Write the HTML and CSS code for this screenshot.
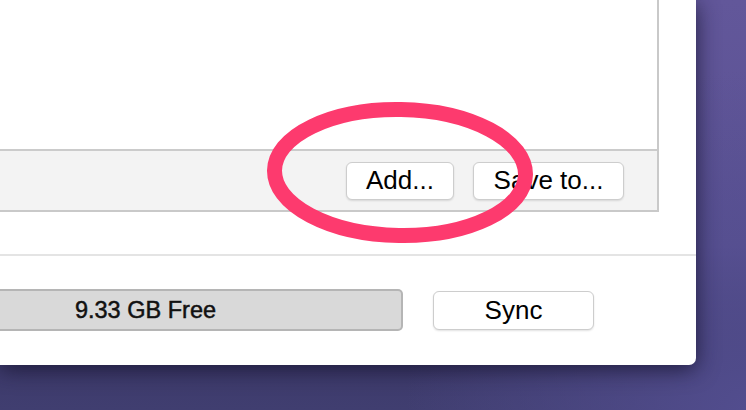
FILE: index.html
```html
<!DOCTYPE html>
<html lang="en">
<head>
    <meta charset="UTF-8">
    <title>Sync</title>
    <link rel="stylesheet" href="styles.css">
</head>
<body>
    <div class="window">
        <div class="list">
            <div class="list-body"></div>
            <div class="list-footer">
                <button class="btn btn-add">Add...</button>
                <button class="btn btn-save">Save to...</button>
            </div>
        </div>

        <div class="separator"></div>

        <div class="status-row">
            <div class="capacity">9.33 GB Free</div>
            <button class="btn btn-sync">Sync</button>
        </div>
    </div>

    <!-- annotation drawn over the screenshot -->
    <svg class="markup" width="746" height="410" viewBox="0 0 746 410">
        <ellipse cx="400" cy="172.5" rx="125.5" ry="63" transform="rotate(1 400 172.5)"
                 fill="none" stroke="#fd3a6e" stroke-width="15"/>
    </svg>
</body>
</html>
```

FILE: styles.css
```css
html, body {
    margin: 0;
    height: 100%;
}
body {
    position: relative;
    overflow: hidden;
    font-family: "Liberation Sans", Arial, sans-serif;
    color: #111;
    background:
        radial-gradient(circle at 100% 100%, #524d8e 0, rgba(82, 77, 142, 0) 40%),
        linear-gradient(180deg, #62579a 0%, #5a5193 60%, #3e3b6c 90%, #403e70 100%);
}
.window {
    width: 696px;
    height: 365px;
    background: #fff;
    border-bottom-right-radius: 7px;
    box-shadow: 0 4px 22px rgba(20, 18, 44, 0.8);
    display: flex;
    flex-direction: column;
}
.list {
    width: 657px;
    height: 210px;
    display: flex;
    flex-direction: column;
    border-right: 2px solid #c9c9c9;
    border-bottom: 2px solid #c9c9c9;
}
.list-body {
    flex: 1;
    background: #fff;
}
.list-footer {
    height: 59px;
    background: #f3f3f3;
    border-top: 2px solid #cbcbcb;
    display: flex;
    align-items: center;
    justify-content: flex-end;
    gap: 19px;
    padding-right: 33px;
}
.btn {
    font-family: inherit;
    font-size: 26px;
    color: #000;
    background: #fff;
    border: 1px solid #cdcdcd;
    border-radius: 6px;
    box-shadow: 0 1px 2px rgba(0, 0, 0, 0.12);
    padding: 0;
    height: 38px;
    cursor: pointer;
}
.btn-add {
    width: 108px;
}
.btn-save {
    width: 151px;
}
.separator {
    height: 2px;
    margin-top: 42px;
    background: #e4e4e4;
}
.status-row {
    display: flex;
    align-items: center;
    gap: 30px;
    margin-top: 33px;
}
.capacity {
    box-sizing: border-box;
    width: 403px;
    height: 42px;
    background: #d9d9d9;
    border: 2px solid #b5b5b5;
    border-left: none;
    border-radius: 0 5px 5px 0;
    display: flex;
    align-items: center;
    justify-content: center;
    padding-right: 110px;
    font-size: 23.5px;
    color: #111;
    -webkit-text-stroke: 0.5px #111;
}
.btn-sync {
    width: 161px;
    height: 39px;
}
.markup {
    position: absolute;
    left: 0;
    top: 0;
    pointer-events: none;
}
```
